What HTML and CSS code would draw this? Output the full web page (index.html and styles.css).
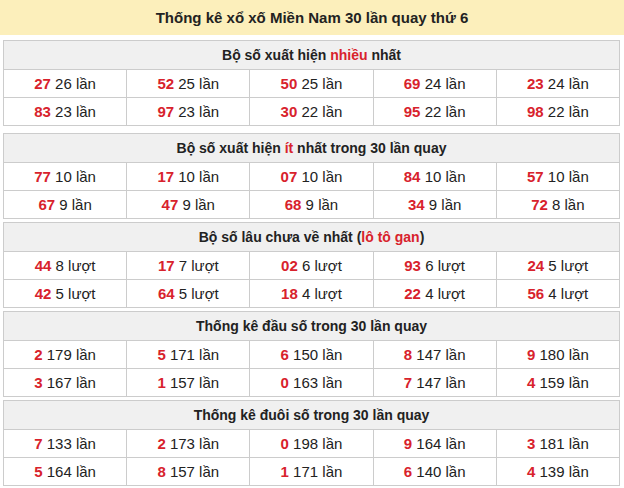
FILE: index.html
```html
<!DOCTYPE html>
<html lang="vi">
<head>
<meta charset="utf-8">
<link rel="stylesheet" href="styles.css">
</head>
<body>
<div class="title">Thống kê xổ xố Miền Nam 30 lần quay thứ 6</div>
<div class="wrap">
<table class="stat first">
<tr><th colspan="5">Bộ số xuất hiện <span class="r">nhiều</span> nhất</th></tr>
<tr><td><b>27</b> 26 lần</td><td><b>52</b> 25 lần</td><td><b>50</b> 25 lần</td><td><b>69</b> 24 lần</td><td><b>23</b> 24 lần</td></tr>
<tr><td><b>83</b> 23 lần</td><td><b>97</b> 23 lần</td><td><b>30</b> 22 lần</td><td><b>95</b> 22 lần</td><td><b>98</b> 22 lần</td></tr>
</table>
<table class="stat">
<tr><th colspan="5">Bộ số xuất hiện <span class="r">ít</span> nhất trong 30 lần quay</th></tr>
<tr><td><b>77</b> 10 lần</td><td><b>17</b> 10 lần</td><td><b>07</b> 10 lần</td><td><b>84</b> 10 lần</td><td><b>57</b> 10 lần</td></tr>
<tr><td><b>67</b> 9 lần</td><td><b>47</b> 9 lần</td><td><b>68</b> 9 lần</td><td><b>34</b> 9 lần</td><td><b>72</b> 8 lần</td></tr>
</table>
<table class="stat">
<tr><th colspan="5">Bộ số lâu chưa về nhất (<span class="r">lô tô gan</span>)</th></tr>
<tr><td><b>44</b> 8 lượt</td><td><b>17</b> 7 lượt</td><td><b>02</b> 6 lượt</td><td><b>93</b> 6 lượt</td><td><b>24</b> 5 lượt</td></tr>
<tr><td><b>42</b> 5 lượt</td><td><b>64</b> 5 lượt</td><td><b>18</b> 4 lượt</td><td><b>22</b> 4 lượt</td><td><b>56</b> 4 lượt</td></tr>
</table>
<table class="stat">
<tr><th colspan="5">Thống kê đầu số trong 30 lần quay</th></tr>
<tr><td><b>2</b> 179 lần</td><td><b>5</b> 171 lần</td><td><b>6</b> 150 lần</td><td><b>8</b> 147 lần</td><td><b>9</b> 180 lần</td></tr>
<tr><td><b>3</b> 167 lần</td><td><b>1</b> 157 lần</td><td><b>0</b> 163 lần</td><td><b>7</b> 147 lần</td><td><b>4</b> 159 lần</td></tr>
</table>
<table class="stat">
<tr><th colspan="5">Thống kê đuôi số trong 30 lần quay</th></tr>
<tr><td><b>7</b> 133 lần</td><td><b>2</b> 173 lần</td><td><b>0</b> 198 lần</td><td><b>9</b> 164 lần</td><td><b>3</b> 181 lần</td></tr>
<tr><td><b>5</b> 164 lần</td><td><b>8</b> 157 lần</td><td><b>1</b> 171 lần</td><td><b>6</b> 140 lần</td><td><b>4</b> 139 lần</td></tr>
</table>
</div>
</body>
</html>
```
FILE: styles.css
```css
html, body { margin: 0; padding: 0; background: #fff; }
body { font-family: "Liberation Sans", Arial, sans-serif; color: #222; }
.title {
  background: #fcefbb;
  height: 35px;
  line-height: 35px;
  text-align: center;
  font-weight: bold;
  font-size: 15px;
  color: #222;
}
.wrap { padding: 5px 4px 0 3px; display: flex; flex-direction: column; gap: 3px; }
.stat {
  width: 100%;
  border-collapse: collapse;
  table-layout: fixed;
  border: 1px solid #ccc;
}
.stat.first { margin-bottom: 4px; }
.stat th {
  background: #f0f0f0;
  height: 28px;
  padding: 0;
  font-size: 14px;
  font-weight: bold;
  color: #222;
  border: 1px solid #ccc;
}
.stat td {
  height: 27px;
  padding: 0;
  text-align: center;
  font-size: 15px;
  border: 1px solid #ccc;
  color: #222;
}
.stat td b { color: #d8222c; }
.r { color: #d8222c; }
```
